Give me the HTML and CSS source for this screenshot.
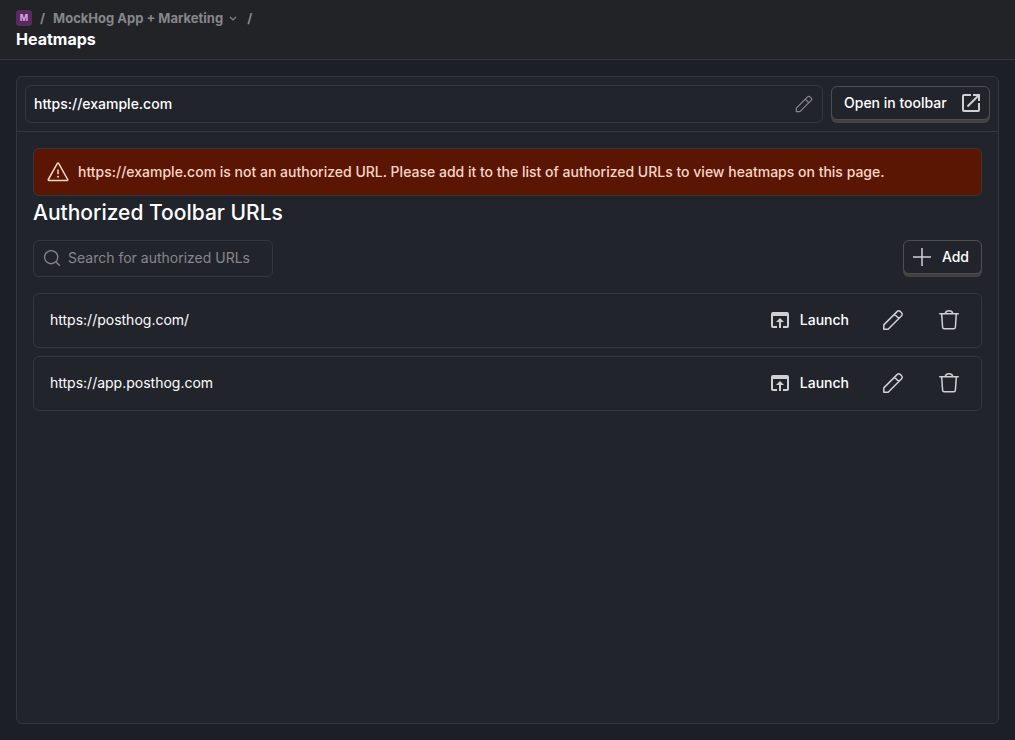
FILE: index.html
```html
<!DOCTYPE html>
<html lang="en">
<head>
<meta charset="utf-8">
<meta name="viewport" content="width=device-width, initial-scale=1">
<title>Heatmaps</title>
<link rel="stylesheet" href="styles.css">
</head>
<body>
<svg class="sprite" aria-hidden="true">
  <symbol id="pencil" viewBox="0 0 24 24"><path d="M2.800 21.200v-4.300L16.300 3.400a2 2 0 0 1 2.900 0l1.400 1.400a2 2 0 0 1 0 2.900L7.100 21.200zM13.500 6.200l4.300 4.300" fill="none" stroke="currentColor" stroke-width="1.500" stroke-linejoin="round"/></symbol>
  <symbol id="trash" viewBox="0 0 24 24"><path d="M2.200 5.700h19.600M4.700 5.900l.9 13.400c.1 1 .7 1.500 1.600 1.500h9.600c.9 0 1.500-.5 1.600-1.500l.9-13.400M8.200 5.500C8.700 3.700 10 2.800 12 2.800s3.300.9 3.800 2.700" fill="none" stroke="currentColor" stroke-width="1.500"/></symbol>
  <symbol id="launch" viewBox="0 0 24 24"><path d="M19 4H5a2 2 0 0 0-2 2v12a2 2 0 0 0 2 2h4v-2H5V8h14v10h-4v2h4a2 2 0 0 0 2-2V6a2 2 0 0 0-2-2zm-7 6-4 4h3v6h2v-6h3z" fill="currentColor"/></symbol>
  <symbol id="external" viewBox="0 0 24 24"><path d="M19 19H5V5h7V3H5a2 2 0 0 0-2 2v14a2 2 0 0 0 2 2h14a2 2 0 0 0 2-2v-7h-2zM14 3v2h3.590l-9.830 9.830 1.410 1.410L19 6.410V10h2V3z" fill="currentColor"/></symbol>
</svg>
<header class="topbar">
  <nav class="crumbs" aria-label="Breadcrumb">
    <span class="avatar">M</span>
    <span class="slash">/</span>
    <button class="crumb" type="button">MockHog App + Marketing
      <svg class="chevron" viewBox="0 0 12 12" aria-hidden="true"><path d="M3 5l3 3 3-3" fill="none" stroke="currentColor" stroke-width="1.200"/></svg>
    </button>
    <span class="slash">/</span>
  </nav>
  <h1 class="page-title">Heatmaps</h1>
</header>
<main class="main">
  <section class="panel">
    <div class="urlbar">
      <label class="field field-url">
        <input class="field-input" type="text" value="https://example.com" aria-label="Page URL">
        <svg class="icon-small" aria-hidden="true"><use href="#pencil"/></svg>
      </label>
      <button class="btn btn-open" type="button">Open in toolbar<svg class="icon" aria-hidden="true"><use href="#external"/></svg></button>
    </div>
    <div class="content">
      <div class="banner" role="alert">
        <svg class="icon" viewBox="0 0 24 24" aria-hidden="true"><path d="M11.500 3.200a.6.6 0 0 1 1 0l9.200 16.300a.6.6 0 0 1-.5.900H2.800a.6.6 0 0 1-.5-.9z" fill="none" stroke="currentColor" stroke-width="1.500"/><path d="M12 9.500v4.800" stroke="currentColor" stroke-width="1.500"/><circle cx="12" cy="16.800" r="1" fill="currentColor"/></svg>
        <span>https://example.com is not an authorized URL. Please add it to the list of authorized URLs to view heatmaps on this page.</span>
      </div>
      <h2 class="heading">Authorized Toolbar URLs</h2>
      <div class="tools">
        <label class="field field-search">
          <svg class="icon-small" viewBox="0 0 24 24" aria-hidden="true"><circle cx="11" cy="11" r="7.900" fill="none" stroke="currentColor" stroke-width="1.600"/><path d="m16.600 16.600 4.800 4.800" stroke="currentColor" stroke-width="1.600"/></svg>
          <input class="field-input" type="search" placeholder="Search for authorized URLs" aria-label="Search for authorized URLs">
        </label>
        <button class="btn btn-add" type="button"><svg class="icon" viewBox="0 0 24 24" aria-hidden="true"><path d="M12 3v18M3 12h18" stroke="currentColor" stroke-width="1.500"/></svg>Add</button>
      </div>
      <ul class="urls">
        <li class="url-row">
          <span class="url">https://posthog.com/</span>
          <a class="action action-launch" href="#"><svg class="icon" aria-hidden="true"><use href="#launch"/></svg>Launch</a>
          <button class="action" type="button" aria-label="Edit"><svg class="icon" aria-hidden="true"><use href="#pencil"/></svg></button>
          <button class="action" type="button" aria-label="Delete"><svg class="icon" aria-hidden="true"><use href="#trash"/></svg></button>
        </li>
        <li class="url-row">
          <span class="url">https://app.posthog.com</span>
          <a class="action action-launch" href="#"><svg class="icon" aria-hidden="true"><use href="#launch"/></svg>Launch</a>
          <button class="action" type="button" aria-label="Edit"><svg class="icon" aria-hidden="true"><use href="#pencil"/></svg></button>
          <button class="action" type="button" aria-label="Delete"><svg class="icon" aria-hidden="true"><use href="#trash"/></svg></button>
        </li>
      </ul>
    </div>
  </section>
</main>
</body>
</html>
```
FILE: styles.css
```css
*, *::before, *::after { box-sizing: border-box; }
:root {
  --bg: #1d1f27;
  --surface: #22242b;
  --border: #35373e;
  --muted: #86878b;
}
body {
  margin: 0;
  min-height: 100vh;
  display: flex;
  flex-direction: column;
  background: var(--bg);
  color: #fff;
  font-family: Inter, "Liberation Sans", sans-serif;
  font-size: 14px;
  line-height: 20px;
}
button, input { font: inherit; color: inherit; }
button { cursor: pointer; }
.sprite { display: none; }
.icon { width: 24px; height: 24px; flex: none; color: #cfd0d2; }
.icon-small { width: 20px; height: 20px; flex: none; color: #86878b; }

.topbar {
  padding: 8px 16px;
  background: #222327;
  border-bottom: 1px solid var(--border);
}
.crumbs {
  display: flex;
  align-items: center;
  gap: 8px;
  height: 20px;
  font-size: 13px;
  font-weight: 700;
  color: var(--muted);
}
.avatar {
  width: 16px;
  height: 16px;
  border-radius: 3px;
  background: #572b5e;
  color: #dfa5e6;
  font-size: 9px;
  line-height: 16px;
  text-align: center;
}
.crumb {
  display: flex;
  align-items: center;
  gap: 4px;
  padding: 0;
  border: 0;
  background: none;
}
.chevron { width: 12px; height: 12px; }
.page-title { margin: 0; font-size: 16px; line-height: 23px; font-weight: 700; }

.main { flex: 1; display: flex; padding: 16px; }
.panel {
  flex: 1;
  min-width: 0;
  background: var(--surface);
  border: 1px solid var(--border);
  border-radius: 6px;
}
.urlbar {
  display: flex;
  align-items: flex-end;
  gap: 8px;
  padding: 8px;
  border-bottom: 1px solid var(--border);
}
.field {
  display: flex;
  align-items: center;
  gap: 6px;
  padding: 0 8px;
  border: 1px solid var(--border);
  border-radius: 6px;
}
.field-url { flex: 1; height: 38px; font-weight: 500; }
.field-search { width: 240px; height: 37px; padding-bottom: 1px; }
.field-input {
  flex: 1;
  min-width: 0;
  padding: 0;
  border: 0;
  outline: 0;
  background: none;
}
.field-input::placeholder { color: var(--muted); opacity: 1; }
.btn {
  display: flex;
  align-items: center;
  justify-content: space-between;
  gap: 8px;
  height: 34px;
  margin: 0 0 3px;
  padding: 0 6px;
  border: 1px solid #4f4f50;
  border-radius: 6px;
  background: var(--surface);
  box-shadow: 0 3px 0 -1px #404041, 0 3px 0 #454546;
  font-weight: 500;
}
.btn-open { min-width: 159px; padding-left: 12px; }
.btn-add { padding-right: 12px; }

.content { padding: 16px; }
.banner {
  display: flex;
  align-items: center;
  gap: 8px;
  min-height: 48px;
  padding: 8px 12px;
  border: 1px solid var(--border);
  border-radius: 6px;
  background: #5a1603;
  color: #fad5c9;
  font-weight: 500;
}
.banner .icon { color: inherit; }
.heading { margin: 0 0 10px; font-size: 21px; line-height: 34px; font-weight: 500; }
.tools { display: flex; justify-content: space-between; }
.urls {
  display: grid;
  gap: 8px;
  margin: 16px 0 0;
  padding: 0;
  list-style: none;
}
.url-row {
  display: flex;
  align-items: center;
  gap: 16px;
  min-height: 55px;
  padding: 8px 12px 9px 16px;
  border: 1px solid var(--border);
  border-radius: 6px;
}
.url { flex: 1; }
.action {
  display: flex;
  align-items: center;
  justify-content: center;
  gap: 8px;
  min-width: 40px;
  height: 36px;
  padding: 0 8px;
  border: 0;
  background: none;
  color: #fff;
  font-weight: 500;
  text-decoration: none;
}
```
